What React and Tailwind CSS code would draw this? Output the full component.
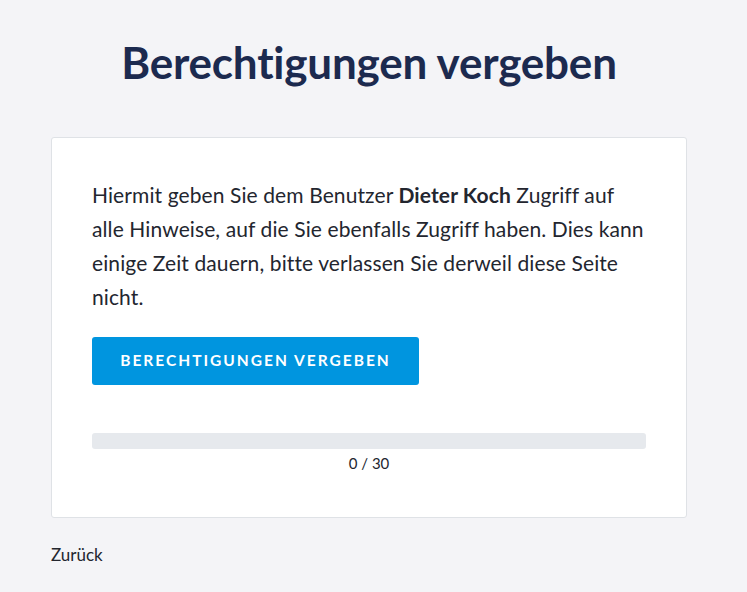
export default function App() {
  return (
    <div className="min-h-[592px] w-full bg-[#f4f4f7] text-[#1f2430]" style={{ fontFamily: 'Lato, "Noto Sans", sans-serif' }}>
      <div className="ml-[51px] w-[636px] pt-[34px]">
        <h1 className="text-center text-[44px] font-bold leading-[56px] text-[#1c2a4f] tracking-[-0.2px]">
          Berechtigungen vergeben
        </h1>
        <div className="mt-[47px] h-[381px] rounded-[3px] border border-[#dfe2e6] bg-white px-[40px] pt-[40px]">
          <p className="text-[21px] leading-[34px] tracking-[0.1px] text-[#23262f] whitespace-nowrap">
            Hiermit geben Sie dem Benutzer <span className="font-bold">Dieter Koch</span> Zugriff auf<br />
            alle Hinweise, auf die Sie ebenfalls Zugriff haben. Dies kann<br />
            einige Zeit dauern, bitte verlassen Sie derweil diese Seite<br />
            nicht.
          </p>
          <button className="mt-[23px] h-[48px] w-[327px] rounded-[3px] bg-[#0095df] text-[15.5px] font-bold uppercase tracking-[2px] text-white">
            Berechtigungen vergeben
          </button>
          <div className="mt-[48px] h-[16px] w-[554px] rounded-[3px] bg-[#e6e9ed]" />
          <div className="w-[554px] pt-[3px] text-center text-[15px] leading-[22px] text-[#23262f]">0 / 30</div>
        </div>
        <div className="mt-[26px] text-[17px] leading-[22px] text-[#23262f]">Zurück</div>
      </div>
    </div>
  );
}
